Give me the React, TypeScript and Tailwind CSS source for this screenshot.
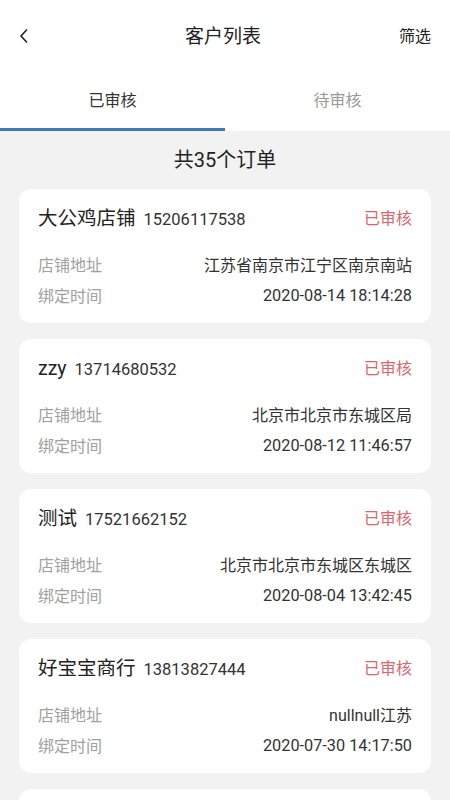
import React from "react";

const font = { fontFamily: 'Roboto, "Noto Sans CJK SC", sans-serif' };

const items = [
  { name: "大公鸡店铺", phone: "15206117538", addr: "江苏省南京市江宁区南京南站", time: "2020-08-14 18:14:28" },
  { name: "zzy", phone: "13714680532", addr: "北京市北京市东城区局", time: "2020-08-12 11:46:57" },
  { name: "测试", phone: "17521662152", addr: "北京市北京市东城区东城区", time: "2020-08-04 13:42:45" },
  { name: "好宝宝商行", phone: "13813827444", addr: "nullnull江苏", time: "2020-07-30 14:17:50" },
  { name: "", phone: "", addr: "", time: "" },
];

export default function App() {
  return (
    <div className="w-[450px] h-[800px] overflow-hidden bg-[#f2f2f2] flex flex-col" style={font}>
      <div className="bg-white shrink-0">
        <div className="h-[74px] flex items-center justify-between px-[18px]">
          <svg width="10" height="16" viewBox="0 0 10 16" className="ml-[1px] mb-[2px]">
            <path d="M8 1.5 L2 8 L8 14.5" fill="none" stroke="#222" strokeWidth="1.6" />
          </svg>
          <div className="text-[19px] text-[#222] ml-[18px]">客户列表</div>
          <div className="text-[16px] text-[#222] mr-[1px]">筛选</div>
        </div>
        <div className="flex h-[57px]">
          <div className="flex-1 flex flex-col">
            <div className="flex-1 flex items-center justify-center text-[16px] text-[#333]">已审核</div>
            <div className="h-[3px] bg-[#3e7bb6]" />
          </div>
          <div className="flex-1 flex flex-col">
            <div className="flex-1 flex items-center justify-center text-[16px] text-[#999]">待审核</div>
            <div className="h-[3px] bg-white" />
          </div>
        </div>
      </div>
      <div className="h-[58px] shrink-0 flex items-center justify-center text-[20px] text-[#222]">共35个订单</div>
      <div className="flex flex-col gap-[16px] px-[19px] shrink-0">
        {items.map((it, i) => (
          <div key={i} className="bg-white rounded-[12px] px-[19px] pt-[18px] pb-[11px] h-[134px] shrink-0">
            {it.name && (
              <>
                <div className="h-[24px] flex items-center justify-between">
                  <div className="flex items-baseline gap-[8px]">
                    <span className="text-[19.5px] text-[#222]">{it.name}</span>
                    <span className="text-[16.5px] text-[#333]">{it.phone}</span>
                  </div>
                  <span className="text-[16px] text-[#e0646c]">已审核</span>
                </div>
                <div className="mt-[19px]">
                  <div className="h-[31px] flex items-center justify-between text-[16px]">
                    <span className="text-[#a0a0a0]">店铺地址</span>
                    <span className="text-[#333]">{it.addr}</span>
                  </div>
                  <div className="h-[31px] flex items-center justify-between text-[16px]">
                    <span className="text-[#a0a0a0]">绑定时间</span>
                    <span className="text-[#333] text-[16.3px]">{it.time}</span>
                  </div>
                </div>
              </>
            )}
          </div>
        ))}
      </div>
    </div>
  );
}
